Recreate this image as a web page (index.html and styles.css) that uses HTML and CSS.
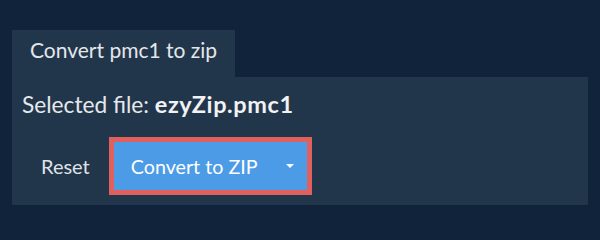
FILE: index.html
```html
<!DOCTYPE html>
<html lang="en">
<head>
<meta charset="utf-8">
<title>Convert pmc1 to zip</title>
<link rel="stylesheet" href="styles.css">
</head>
<body>
<div class="wrap">
  <div class="tab">Convert pmc1 to zip</div>
  <div class="panel">
    <div class="selected">Selected file: <b>ezyZip.pmc1</b></div>
    <div class="actions">
      <button class="btn-reset" type="button">Reset</button>
      <button class="btn-main" type="button"><span class="label">Convert to ZIP</span><span class="caret"></span></button>
    </div>
  </div>
</div>
</body>
</html>
```

FILE: styles.css
```css
html, body {
  margin: 0;
  padding: 0;
  background: #11233a;
  font-family: Lato, "Open Sans", sans-serif;
  color: #e6e9ec;
}
.wrap {
  padding: 30px 12px 0 12px;
}
.tab {
  display: inline-block;
  background: #22364b;
  font-size: 21px;
  line-height: 24px;
  padding: 8px 18px 15px 18px;
  color: #e4e7ea;
}
.panel {
  background: #22364b;
  padding: 14px 10px 10px 10px;
}
.selected {
  font-size: 22.7px;
  line-height: 26px;
  color: #e6e9ec;
}
.selected b {
  font-weight: 700;
  letter-spacing: 0.6px;
  font-size: 23.5px;
  color: #f1f2f4;
}
.actions {
  display: flex;
  align-items: center;
  margin-top: 19px;
}
.btn-reset {
  font-family: inherit;
  font-size: 20px;
  background: transparent;
  border: 0;
  color: #dfe3e7;
  padding: 0 19px 0 19px;
  height: 48px;
  cursor: pointer;
}
.btn-main {
  font-family: inherit;
  font-size: 19.7px;
  display: flex;
  align-items: center;
  height: 58px;
  box-sizing: border-box;
  background: #4c9be6;
  border: 5px solid #e0605e;
  color: #ffffff;
  padding: 0 13px 0 17px;
  cursor: pointer;
}
.caret {
  width: 0;
  height: 0;
  margin-left: 28px;
  border-left: 4px solid transparent;
  border-right: 4px solid transparent;
  border-top: 4px solid #ffffff;
}
```
